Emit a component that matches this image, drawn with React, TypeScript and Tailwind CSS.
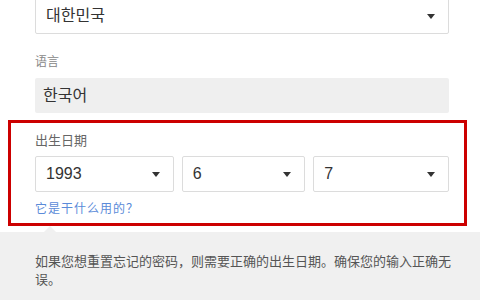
import React from 'react';

const kr = { fontFamily: "'Liberation Sans', 'Noto Sans CJK KR', sans-serif" };
const sc = { fontFamily: "'Liberation Sans', 'Noto Sans CJK SC', sans-serif" };

function Caret() {
    return (
        <svg width="8" height="5" viewBox="0 0 8 5" className="shrink-0">
            <path d="M0 0 H8 L4 5 Z" fill="#333" />
        </svg>
    );
}

function SelectBox({ value, className, style }: { value: string; className: string; style?: React.CSSProperties }) {
    return (
        <div className={`flex items-center justify-between border border-[#dcdcdc] rounded-[2px] bg-white ${className}`} style={style}>
            <span className="text-[16px] text-[#333]">{value}</span>
            <Caret />
        </div>
    );
}

export default function App() {
    return (
        <div className="w-[480px] h-[300px] bg-white overflow-hidden">
            {/* Country */}
            <div className="pl-[35px] pr-[31px] -mt-[2px]">
                <SelectBox value="대한민국" className="h-[36px] pl-[10px] pr-[13px]" style={kr} />
            </div>

            {/* Language */}
            <div className="pl-[35px] pr-[31px]">
                <p className="mt-[19px] text-[12px] leading-[18px] text-[#888]" style={sc}>语言</p>
                <div className="mt-[7px] h-[35px] bg-[#efefef] rounded-[2px] flex items-center pl-[8px]">
                    <span className="text-[16px] text-[#333]" style={kr}>한국어</span>
                </div>
            </div>

            {/* Birthday */}
            <div className="ml-[8px] w-[459px] mt-[7px] h-[106px] border-[3px] border-[#cc0000] pl-[24px] pr-[15px]">
                <p className="mt-[8px] text-[13px] leading-[20px] text-[#666]" style={sc}>出生日期</p>
                <div className="mt-[5px] flex gap-[8px]" style={sc}>
                    <SelectBox value="1993" className="w-[139px] h-[36px] pl-[10px] pr-[13px]" />
                    <SelectBox value="6" className="w-[124px] h-[36px] pl-[10px] pr-[13px]" />
                    <SelectBox value="7" className="w-[136px] h-[36px] pl-[10px] pr-[13px]" />
                </div>
                <p className="mt-[8px] text-[12px] leading-[18px] text-[#5b8bd9] tracking-[1px]" style={sc}>它是干什么用的？</p>
            </div>

            {/* Hint */}
            <div className="relative mt-[6px] bg-[#f0f0f0] h-[80px] pl-[35px] pr-[26px] pt-[21px]">
                <div className="absolute -top-[6px] left-[44px] w-0 h-0 border-l-[6px] border-r-[6px] border-b-[6px] border-l-transparent border-r-transparent border-b-[#f0f0f0]" />
                <p className="text-[13px] leading-[18px] text-[#555]" style={sc}>
                    如果您想重置忘记的密码，则需要正确的出生日期。确保您的输入正确无误。
                </p>
            </div>
        </div>
    );
}
